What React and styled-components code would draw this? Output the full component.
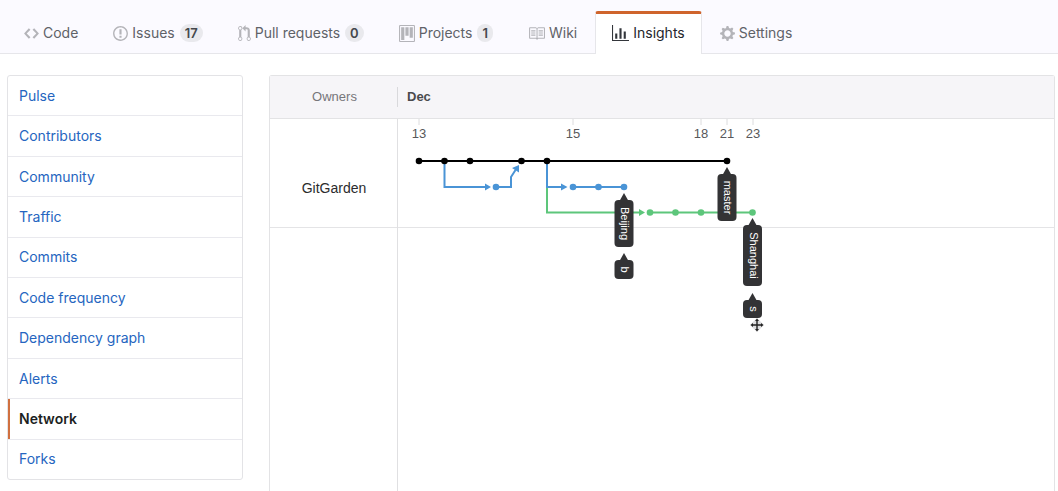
import React from "react";
import styled, { createGlobalStyle, css } from "styled-components";

const Global = createGlobalStyle`
  *, *::before, *::after { box-sizing: border-box; }
  body {
    margin: 0;
    background: #fff;
    font-family: Inter, "Liberation Sans", sans-serif;
    color: #24292e;
  }
`;

const Page = styled.div`
  display: flex;
  flex-direction: column;
  min-height: 100vh;
`;

const TabBar = styled.nav`
  display: flex;
  align-items: flex-end;
  gap: 1px;
  height: 54px;
  padding-left: 7px;
  background: #fbfaff;
  border-bottom: 1px solid #e6e6ea;
`;

const Tab = styled.a`
  display: flex;
  align-items: center;
  height: 43px;
  margin-bottom: -1px;
  padding: 0 16px 2px;
  border: 1px solid transparent;
  border-top: 3px solid transparent;
  border-bottom: 0;
  border-radius: 3px 3px 0 0;
  color: #5f6268;
  font-size: 14px;
  line-height: 20px;
  white-space: nowrap;
  text-decoration: none;
  ${(p) =>
    p.$active &&
    css`
      background: #fff;
      color: #24262b;
      border-color: #cf642c #e6e6ea #fff;
    `}
`;

const TabIcon = styled.svg`
  flex: none;
  margin-right: 4px;
  fill: ${(p) => (p.$active ? "#33363b" : "#b4b4b9")};
`;

const Counter = styled.span`
  margin-left: 5px;
  padding: 0 5px;
  border-radius: 9px;
  background: #e9e9ed;
  color: #44474c;
  font-size: 13px;
  font-weight: 600;
  line-height: 18px;
`;

const Main = styled.main`
  display: flex;
  flex: 1;
  align-items: stretch;
  gap: 26px;
  padding: 21px 3px 0 7px;
`;

const Menu = styled.nav`
  display: flex;
  flex: none;
  flex-direction: column;
  align-self: flex-start;
  width: 236px;
  min-height: 405px;
  border: 1px solid #e3e3e6;
  border-radius: 3px;
`;

const MenuItem = styled.a`
  display: flex;
  flex: 1;
  align-items: center;
  padding: 0 11px;
  border-bottom: 1px solid #e9e9ee;
  color: #2565c0;
  font-size: 14px;
  line-height: 20px;
  text-decoration: none;
  &:last-child {
    border-bottom: 0;
  }
  ${(p) =>
    p.$active &&
    css`
      color: #1d1f23;
      font-weight: 600;
      box-shadow: inset 2px 0 0 #d0703f;
    `}
`;

const Network = styled.section`
  display: flex;
  flex: 1;
  flex-direction: column;
  min-width: 0;
  border: 1px solid #e3e3e5;
  border-bottom: 0;
  border-radius: 3px 3px 0 0;
  font-family: "Liberation Sans", Arial, sans-serif;
`;

const NetworkHead = styled.header`
  display: flex;
  align-items: center;
  height: 43px;
  border-bottom: 1px solid #e3e3e5;
  background: #f6f5f8;
  font-size: 13px;
  line-height: 20px;
`;

const OwnersTitle = styled.div`
  width: 128px;
  padding-left: 2px;
  border-right: 1px solid #d9d9dc;
  color: #76767a;
  text-align: center;
`;

const Month = styled.div`
  padding-left: 9px;
  color: #4a4a4d;
  font-weight: bold;
`;

const NetworkBody = styled.div`
  display: flex;
  flex: 1;
`;

const Owners = styled.div`
  flex: none;
  width: 128px;
  border-right: 1px solid #e0e0e2;
`;

const Owner = styled.div`
  height: 109px;
  padding: 59px 0 0 1px;
  border-bottom: 1px solid #e4e4e6;
  color: #2b2b2d;
  font-size: 14px;
  line-height: 20px;
  text-align: center;
`;

const Graph = styled.svg`
  display: block;
  flex: 1;
  min-width: 0;
  height: 240px;
`;

const DateLabel = styled.text`
  fill: #58585b;
  font-size: 13px;
  text-anchor: middle;
`;

const BranchLabel = styled.text`
  fill: #fff;
  font-size: 11px;
  text-anchor: middle;
`;

const ICONS = {
  code: [14, 15, "M9.5 3L8 4.5 11.5 8 8 11.5 9.5 13 14 8 9.5 3zm-5 0L0 8l4.5 5L6 11.5 2.5 8 6 4.5 4.5 3z"],
  issue: [14, 15, "M7 2.3c3.14 0 5.7 2.56 5.7 5.7s-2.56 5.7-5.7 5.7A5.71 5.71 0 0 1 1.3 8c0-3.14 2.56-5.7 5.7-5.7zM7 1C3.14 1 0 4.14 0 8s3.14 7 7 7 7-3.14 7-7-3.14-7-7-7zm1 3H6v5h2V4zm0 6H6v2h2v-2z"],
  pull: [12, 13, "M11 11.28V5c-.03-.78-.34-1.47-.94-2.06C9.46 2.35 8.78 2.03 8 2H7V0L4 3l3 3V4h1c.27.02.48.11.69.31.21.2.3.42.31.69v6.28A1.993 1.993 0 0 0 10 15a1.993 1.993 0 0 0 1-3.72zm-1 2.92c-.66 0-1.2-.55-1.2-1.2 0-.65.55-1.2 1.2-1.2.65 0 1.2.55 1.2 1.2 0 .65-.55 1.2-1.2 1.2zM4 3c0-1.11-.89-2-2-2a1.993 1.993 0 0 0-1 3.72v6.56A1.993 1.993 0 0 0 2 15a1.993 1.993 0 0 0 1-3.72V4.72c.59-.34 1-.98 1-1.72zm-.8 10c0 .66-.55 1.2-1.2 1.2-.65 0-1.2-.55-1.2-1.2 0-.65.55-1.2 1.2-1.2.65 0 1.2.55 1.2 1.2zM2 4.2C1.34 4.2.8 3.65.8 3c0-.65.55-1.2 1.2-1.2.65 0 1.2.55 1.2 1.2 0 .65-.55 1.2-1.2 1.2z"],
  project: [15, 16, "M10 12h3V2h-3v10zm-4-2h3V2H6v8zm-4 4h3V2H2v12zm-1 1h13V1H1v14zM14 0H1a1 1 0 0 0-1 1v14a1 1 0 0 0 1 1h13a1 1 0 0 0 1-1V1a1 1 0 0 0-1-1z"],
  book: [16, 17, "M3 5h4v1H3V5zm0 3h4V7H3v1zm0 2h4V9H3v1zm11-5h-4v1h4V5zm0 2h-4v1h4V7zm0 2h-4v1h4V9zm2-6v9c0 .55-.45 1-1 1H9.5l-1 1-1-1H2c-.55 0-1-.45-1-1V3c0-.55.45-1 1-1h5.5l1 1 1-1H15c.55 0 1 .45 1 1zm-8 .5L7.5 3H2v9h6V3.5zm7-.5H9.5l-.5.5V12h6V3z"],
  graph: [16, 17, "M16 14v1H0V0h1v14h15zM5 13H3V8h2v5zm4 0H7V3h2v10zm4 0h-2V6h2v7z"],
  gear: [14, 15, "M14 8.77v-1.6l-1.94-.64-.45-1.09.88-1.84-1.13-1.13-1.81.91-1.09-.45-.69-1.92h-1.6l-.63 1.94-1.11.45-1.84-.88-1.13 1.13.9 1.82-.45 1.09L0 7.23v1.59l1.94.64.45 1.09-.88 1.84 1.13 1.13 1.81-.91 1.09.45.69 1.92h1.59l.63-1.94 1.11-.45 1.84.88 1.13-1.13-.92-1.81.47-1.09L14 8.75v.02zM7 11c-1.66 0-3-1.34-3-3s1.34-3 3-3 3 1.34 3 3-1.34 3-3 3z"],
};

const TABS = [
  { label: "Code", icon: "code" },
  { label: "Issues", icon: "issue", count: 17 },
  { label: "Pull requests", icon: "pull", count: 0 },
  { label: "Projects", icon: "project", count: 1 },
  { label: "Wiki", icon: "book" },
  { label: "Insights", icon: "graph", active: true },
  { label: "Settings", icon: "gear" },
];

const MENU = [
  "Pulse",
  "Contributors",
  "Community",
  "Traffic",
  "Commits",
  "Code frequency",
  "Dependency graph",
  "Alerts",
  "Network",
  "Forks",
];

const DATES = [
  [21, "13"],
  [175, "15"],
  [303, "18"],
  [329, "21"],
  [355, "23"],
];

const BLUE = "#4a94d6";
const GREEN = "#5dc67b";

const COMMITS = [
  { color: "#000", y: 42, xs: [21, 46.5, 72, 123.5, 149, 329] },
  { color: BLUE, y: 68, xs: [98, 175, 200.5, 226] },
  { color: GREEN, y: 93.5, xs: [252, 277.5, 303, 354.5] },
];

const BRANCHES = [
  { name: "master", x: 329, y: 48, length: 47 },
  { name: "Beijing", x: 226, y: 74, length: 47 },
  { name: "b", x: 226, y: 134, length: 19 },
  { name: "Shanghai", x: 354.5, y: 99, length: 61 },
  { name: "s", x: 354.5, y: 174, length: 18 },
];

function Branch({ name, x, y, length }) {
  const middle = 7 + length / 2;
  return (
    <g transform={`translate(${x} ${y})`}>
      <path d="M0 0L4.5 8H-4.5Z" fill="#333335" />
      <rect x="-9.5" y="7" width="19" height={length} rx="4" fill="#333335" />
      <BranchLabel transform={`translate(-3 ${middle}) rotate(90)`}>{name}</BranchLabel>
    </g>
  );
}

function MovePointer() {
  return (
    <g transform="translate(359 206)">
      <path d="M0-7L7 0L0 7L-7 0Z" fill="#dedee0" />
      <path d="M-5 0H5M0-5V5" stroke="#222" strokeWidth="1.4" />
      <path
        d="M0-6.500L2-4H-2ZM0 6.500L2 4H-2ZM-6.500 0L-4-2V2ZM6.500 0L4-2V2Z"
        fill="#222"
      />
    </g>
  );
}

function NetworkGraph() {
  return (
    <Graph role="img" aria-label="Network graph">
      <line x1="0" x2="100%" y1="108.5" y2="108.5" stroke="#e4e4e6" />
      {DATES.map(([x, day]) => (
        <g key={day}>
          <line x1={x} x2={x} y1="0" y2="6" stroke="#dcdcde" />
          <DateLabel x={x} y="19">{day}</DateLabel>
        </g>
      ))}
      <g fill="none" strokeWidth="2">
        <path d="M149 42V93.5H243M252 93.5H354.5" stroke={GREEN} />
        <path d="M46.5 42V68H89M98 68H113V58L117.5 51M149 42V68H165M175 68H226" stroke={BLUE} />
        <path d="M21 42H329" stroke="#000" />
      </g>
      <path d="M87 64.500L93 68L87 71.500ZM163 64.500L169.500 68L163 71.500ZM121 46L121 53.500L114 49Z" fill={BLUE} />
      <path d="M241 90L247 93.500L241 97Z" fill={GREEN} />
      {COMMITS.map(({ color, y, xs }) =>
        xs.map((x) => <circle key={`${x}-${y}`} cx={x} cy={y} r="3.3" fill={color} />)
      )}
      {BRANCHES.map((b) => (
        <Branch key={b.name} {...b} />
      ))}
      <MovePointer />
    </Graph>
  );
}

export default function App() {
  return (
    <Page>
      <Global />
      <TabBar aria-label="Repository">
        {TABS.map(({ label, icon, count, active }) => {
          const [boxWidth, width, path] = ICONS[icon];
          return (
            <Tab key={label} href="#" $active={active} aria-current={active ? "page" : undefined}>
              <TabIcon
                $active={active}
                width={width}
                height="17"
                viewBox={`0 0 ${boxWidth} 16`}
                aria-hidden="true"
              >
                <path fillRule="evenodd" d={path} />
              </TabIcon>
              {label}
              {count !== undefined && <Counter>{count}</Counter>}
            </Tab>
          );
        })}
      </TabBar>
      <Main>
        <Menu aria-label="Insights">
          {MENU.map((label) => (
            <MenuItem
              key={label}
              href="#"
              $active={label === "Network"}
              aria-current={label === "Network" ? "page" : undefined}
            >
              {label}
            </MenuItem>
          ))}
        </Menu>
        <Network>
          <NetworkHead>
            <OwnersTitle>Owners</OwnersTitle>
            <Month>Dec</Month>
          </NetworkHead>
          <NetworkBody>
            <Owners>
              <Owner>GitGarden</Owner>
            </Owners>
            <NetworkGraph />
          </NetworkBody>
        </Network>
      </Main>
    </Page>
  );
}
